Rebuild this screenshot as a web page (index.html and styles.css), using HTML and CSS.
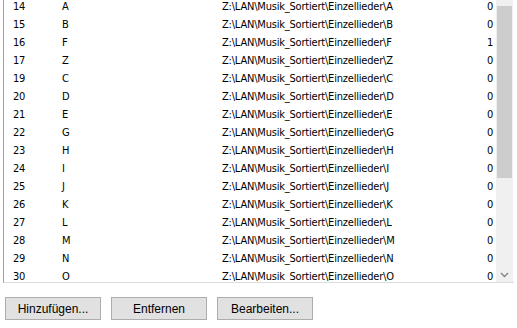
FILE: index.html
```html
<!DOCTYPE html>
<html lang="de">
<head>
    <meta charset="UTF-8">
    <meta name="viewport" content="width=device-width, initial-scale=1.0">
    <title>Ordner</title>
    <link rel="stylesheet" href="styles.css">
</head>
<body>

    <!-- LIST -->
    <div class="list_box">
        <div class="list_rows">
            <div class="row"><span>14</span><span>A</span><span>Z:\LAN\Musik_Sortiert\Einzellieder\A</span><span class="count">0</span></div>
            <div class="row"><span>15</span><span>B</span><span>Z:\LAN\Musik_Sortiert\Einzellieder\B</span><span class="count">0</span></div>
            <div class="row"><span>16</span><span>F</span><span>Z:\LAN\Musik_Sortiert\Einzellieder\F</span><span class="count">1</span></div>
            <div class="row"><span>17</span><span>Z</span><span>Z:\LAN\Musik_Sortiert\Einzellieder\Z</span><span class="count">0</span></div>
            <div class="row"><span>19</span><span>C</span><span>Z:\LAN\Musik_Sortiert\Einzellieder\C</span><span class="count">0</span></div>
            <div class="row"><span>20</span><span>D</span><span>Z:\LAN\Musik_Sortiert\Einzellieder\D</span><span class="count">0</span></div>
            <div class="row"><span>21</span><span>E</span><span>Z:\LAN\Musik_Sortiert\Einzellieder\E</span><span class="count">0</span></div>
            <div class="row"><span>22</span><span>G</span><span>Z:\LAN\Musik_Sortiert\Einzellieder\G</span><span class="count">0</span></div>
            <div class="row"><span>23</span><span>H</span><span>Z:\LAN\Musik_Sortiert\Einzellieder\H</span><span class="count">0</span></div>
            <div class="row"><span>24</span><span>I</span><span>Z:\LAN\Musik_Sortiert\Einzellieder\I</span><span class="count">0</span></div>
            <div class="row"><span>25</span><span>J</span><span>Z:\LAN\Musik_Sortiert\Einzellieder\J</span><span class="count">0</span></div>
            <div class="row"><span>26</span><span>K</span><span>Z:\LAN\Musik_Sortiert\Einzellieder\K</span><span class="count">0</span></div>
            <div class="row"><span>27</span><span>L</span><span>Z:\LAN\Musik_Sortiert\Einzellieder\L</span><span class="count">0</span></div>
            <div class="row"><span>28</span><span>M</span><span>Z:\LAN\Musik_Sortiert\Einzellieder\M</span><span class="count">0</span></div>
            <div class="row"><span>29</span><span>N</span><span>Z:\LAN\Musik_Sortiert\Einzellieder\N</span><span class="count">0</span></div>
            <div class="row"><span>30</span><span>O</span><span>Z:\LAN\Musik_Sortiert\Einzellieder\O</span><span class="count">0</span></div>
        </div>

        <div class="scrollbar">
            <div class="scroll_thumb"></div>
            <div class="scroll_arrow">
                <svg width="9" height="6" viewBox="0 0 9 6">
                    <path d="M1 1 L4.5 4.5 L8 1" fill="none" stroke="#858585" stroke-width="1.4"/>
                </svg>
            </div>
        </div>
    </div>

    <!-- BUTTONS -->
    <div class="button_bar">
        <button>Hinzufügen...</button>
        <button>Entfernen</button>
        <button>Bearbeiten...</button>
    </div>

</body>
</html>
```

FILE: styles.css
```css
body
{
    margin: 0;
    background-color: #fff;
    font-family: 'DejaVu Sans Condensed', 'DejaVu Sans', sans-serif;
    font-stretch: condensed;
    color: #000;
}
.list_box
{
    display: flex;
    margin-left: 3px;
    width: 510px;
    height: 282px;
    border-left: 1px solid #a0a0a0;
    border-bottom: 1px solid #dcdcdc;
}
.list_rows
{
    flex: 1;
    overflow: hidden;
}
.row
{
    display: grid;
    grid-template-columns: 49px 160px 1fr auto;
    height: 18px;
    line-height: 18px;
    padding: 0 3px 0 9px;
    font-size: 11px;
    letter-spacing: -0.2px;
    white-space: nowrap;
}
.row:first-child
{
    margin-top: -2px;
}
.count
{
    text-align: right;
}

/* scrollbar */
.scrollbar
{
    width: 17px;
    margin-right: 1px;
    background-color: #f0f0f0;
    display: flex;
    flex-direction: column;
    align-items: center;
}
.scroll_thumb
{
    width: 15px;
    height: 172px;
    margin-top: 6px;
    background-color: #cdcdcd;
}
.scroll_arrow
{
    margin-top: auto;
    height: 14px;
    display: flex;
    align-items: center;
    justify-content: center;
}
.scroll_arrow svg
{
    display: block;
}

/* buttons */
.button_bar
{
    display: flex;
    gap: 10px;
    padding: 14px 0 0 5px;
}
button
{
    width: 96px;
    height: 23px;
    padding: 0;
    background-color: #e1e1e1;
    border: 1px solid #adadad;
    border-radius: 0;
    font-family: 'Liberation Sans', Arial, sans-serif;
    font-size: 12px;
    color: #000;
}
```
